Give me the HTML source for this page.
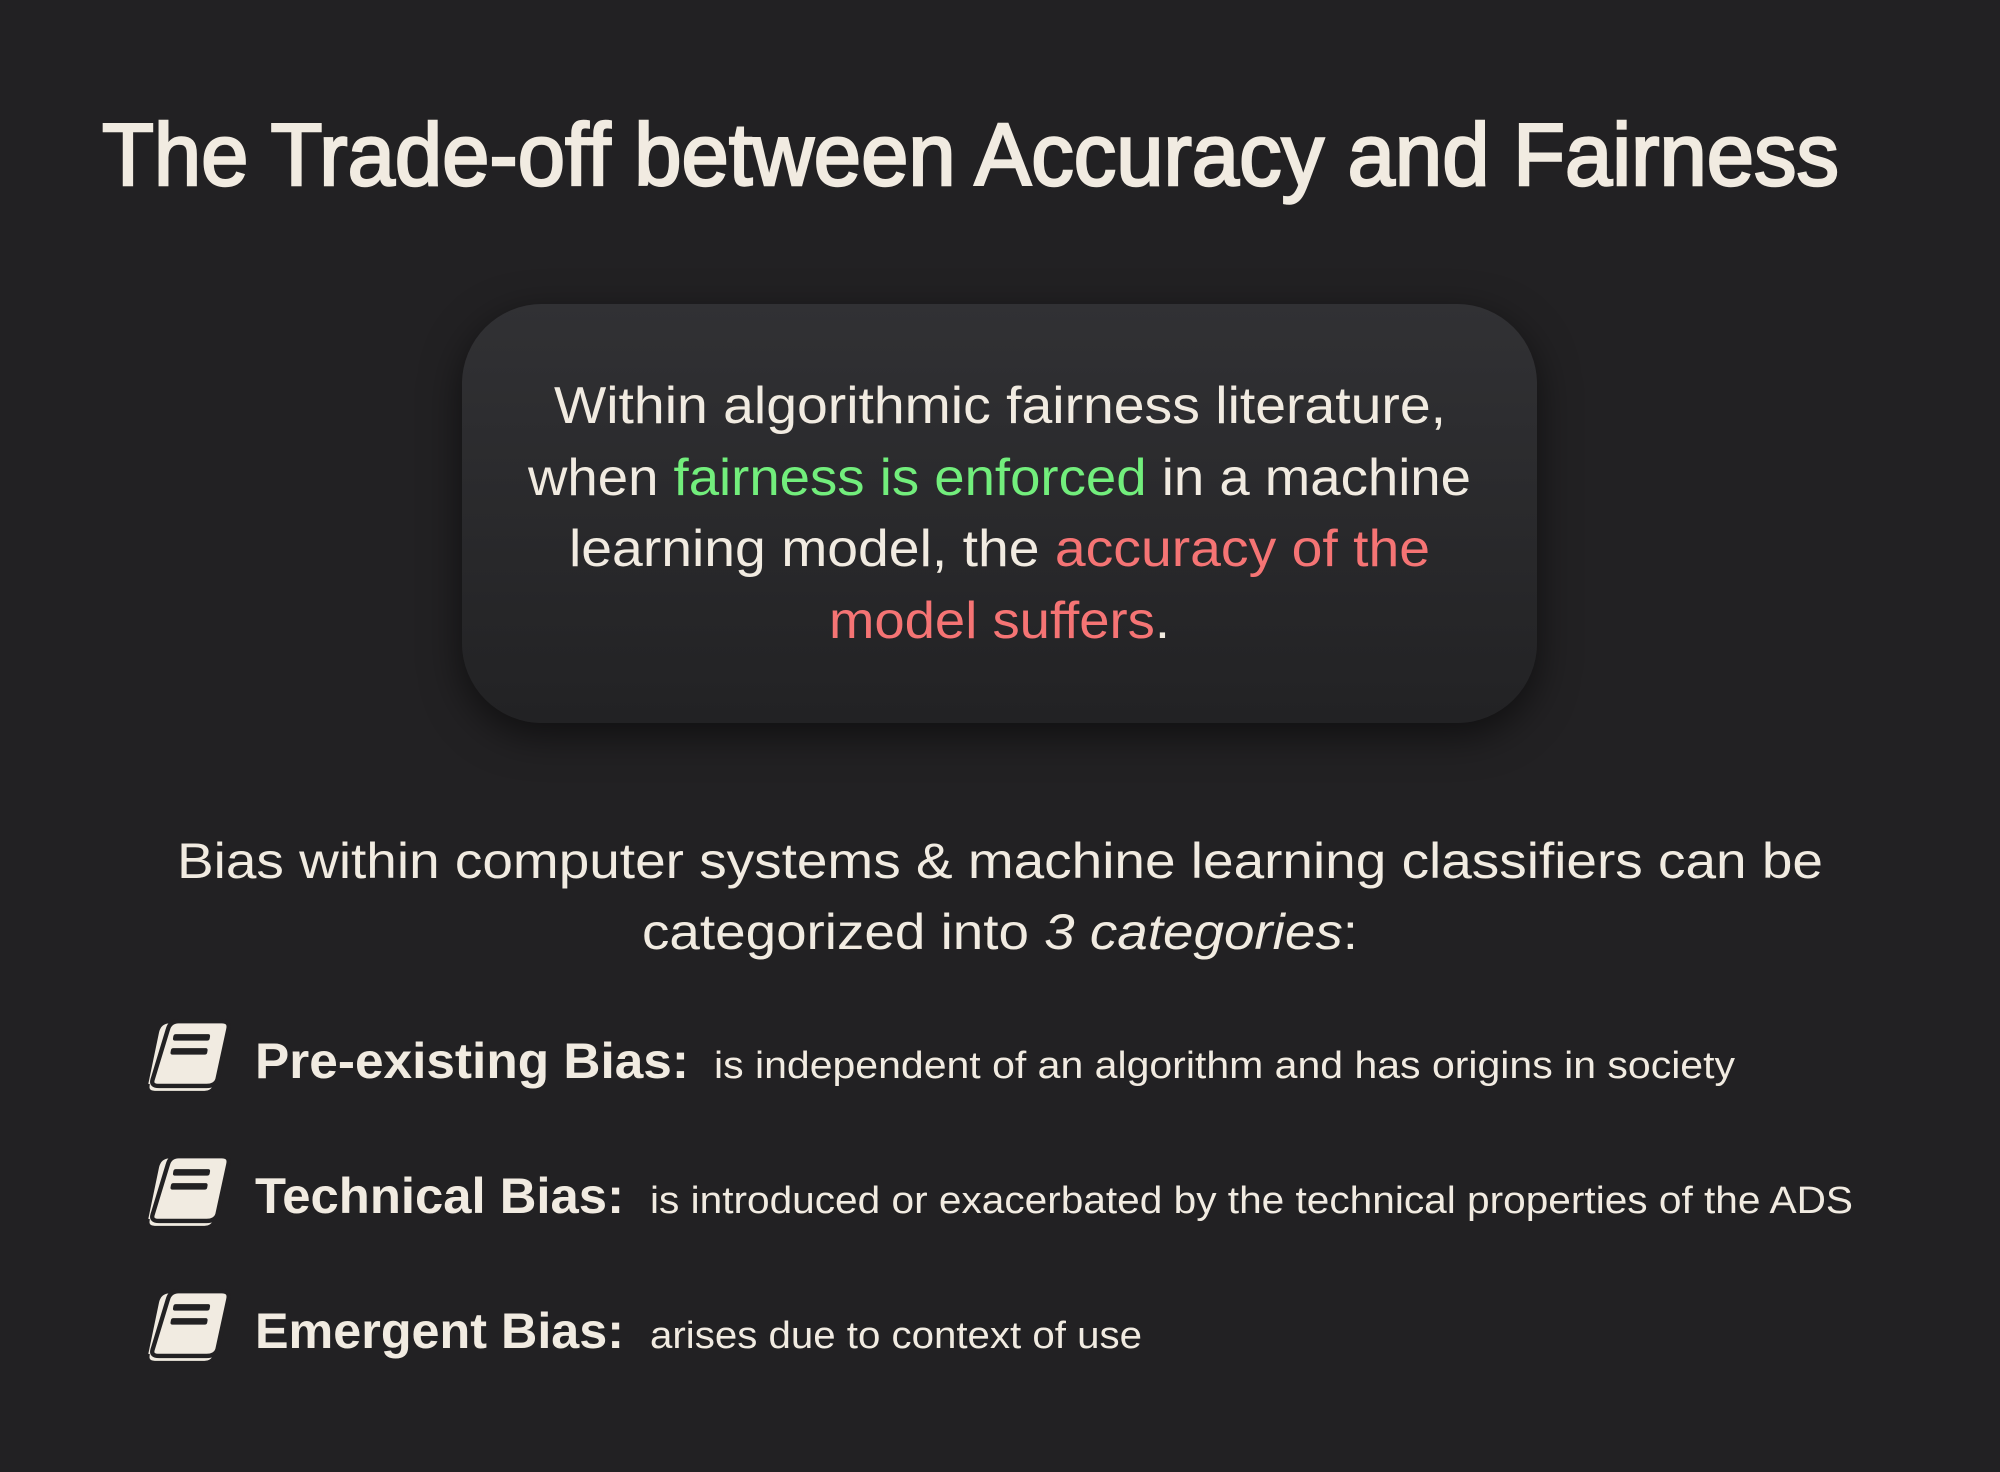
<!DOCTYPE html>
<html><head><meta charset="utf-8"><style>
html,body{margin:0;padding:0;background:#222123;width:2000px;height:1472px;overflow:hidden}
.box{position:absolute;left:462px;top:304px;width:1075px;height:419px;border-radius:80px;background:linear-gradient(#313134,#222224);box-shadow:0 12px 40px rgba(0,0,0,.55)}
svg{position:absolute;left:0;top:0}
text{font-family:"Liberation Sans",sans-serif;fill:#f1ebe1}
</style></head><body>
<div class="box"></div>
<svg width="2000" height="1472" viewBox="0 0 2000 1472">
<text x="102" y="185" font-size="88" textLength="1737" lengthAdjust="spacingAndGlyphs" stroke="#f1ebe1" stroke-width="2.5">The Trade-off between Accuracy and Fairness</text>
<g font-size="52">
<text x="554" y="423" textLength="892" lengthAdjust="spacingAndGlyphs">Within algorithmic fairness literature,</text>
<text x="528" y="495" textLength="943" lengthAdjust="spacingAndGlyphs">when <tspan style="fill:#72ee7c">fairness is enforced</tspan> in a machine</text>
<text x="569" y="566" textLength="861" lengthAdjust="spacingAndGlyphs">learning model, the <tspan style="fill:#f57474">accuracy of the</tspan></text>
<text x="829" y="638" textLength="341" lengthAdjust="spacingAndGlyphs"><tspan style="fill:#f57474">model suffers</tspan>.</text>
</g>
<g font-size="50">
<text x="177" y="878" textLength="1646" lengthAdjust="spacingAndGlyphs">Bias within computer systems &amp; machine learning classifiers can be</text>
<text x="642" y="949" textLength="716" lengthAdjust="spacingAndGlyphs">categorized into <tspan font-style="italic">3 categories</tspan>:</text>
</g>
<defs>
<g id="bk">
<path d="M14 12 Q16 4 24 4 L70 4 Q78 4 76 12 L66 60 Q64 68 56 68 L10 68 Q2 68 4 60 Z" fill="#f1ebe1"/>
<path d="M22 10 Q24 2 32 2 L72 2 Q80 2 78 10 L68 56 Q66 62 58 62 L14 62 Q6 62 8 56 Z" fill="#f1ebe1" stroke="#222123" stroke-width="4"/>
<rect x="30" y="14" width="34" height="6" rx="2" fill="#222123" transform="skewX(-10)"/>
<rect x="30" y="27" width="34" height="6" rx="2" fill="#222123" transform="skewX(-10)"/>
<path d="M4 60 Q2 68 10 68 L56 68 Q64 68 66 60" fill="none" stroke="#222123" stroke-width="3"/>
</g>
</defs>
<use href="#bk" transform="translate(144 1019) scale(1.08)"/>
<use href="#bk" transform="translate(144 1154) scale(1.08)"/>
<use href="#bk" transform="translate(144 1289) scale(1.08)"/>
<g font-size="50" font-weight="bold">
<text x="255" y="1078" textLength="434" lengthAdjust="spacingAndGlyphs">Pre-existing Bias:</text>
<text x="255" y="1213" textLength="369" lengthAdjust="spacingAndGlyphs">Technical Bias:</text>
<text x="255" y="1348" textLength="369" lengthAdjust="spacingAndGlyphs">Emergent Bias:</text>
</g>
<g font-size="38">
<text x="714" y="1078" textLength="1021" lengthAdjust="spacingAndGlyphs">is independent of an algorithm and has origins in society</text>
<text x="650" y="1213" textLength="1203" lengthAdjust="spacingAndGlyphs">is introduced or exacerbated by the technical properties of the ADS</text>
<text x="650" y="1348" textLength="492" lengthAdjust="spacingAndGlyphs">arises due to context of use</text>
</g>
</svg>
</body></html>
